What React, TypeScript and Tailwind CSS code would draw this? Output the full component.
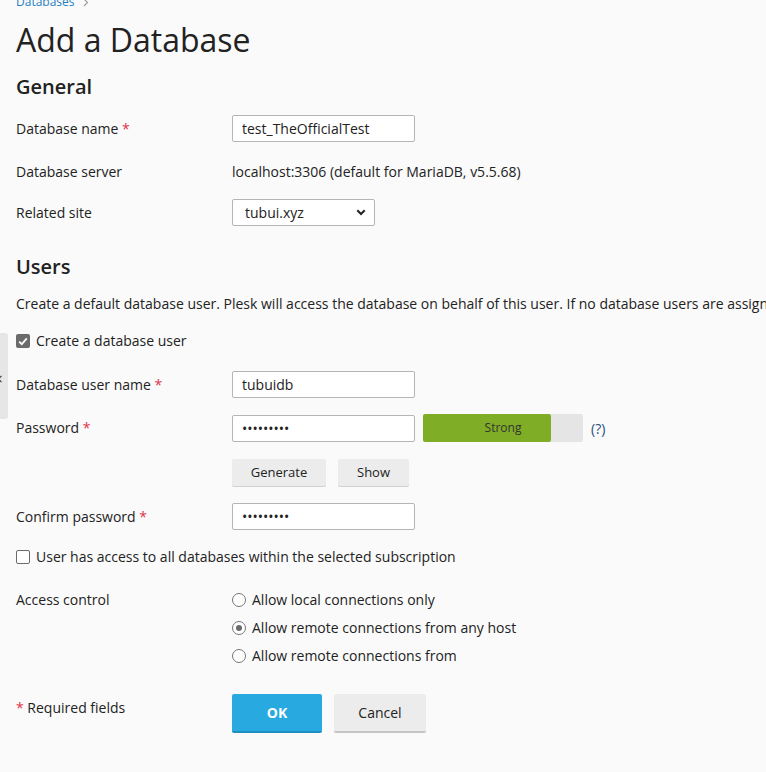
import React from "react";

const Req = () => <span className="text-[#e0334d]"> *</span>;

function Label({ children }: { children: React.ReactNode }) {
  return <div className="w-[216px] shrink-0 text-[14px] leading-[20px] text-[#222]">{children}</div>;
}

function TextInput({ value, type = "text" }: { value: string; type?: string }) {
  return (
    <input
      type={type}
      defaultValue={value}
      readOnly
      className="h-[27px] w-[183px] rounded-[2px] border border-[#b5b5b5] bg-white px-[9px] text-[14px] text-[#222] outline-none"
      style={{ fontFamily: "'Open Sans', sans-serif" }}
    />
  );
}

function Radio({ checked, label }: { checked?: boolean; label: string }) {
  return (
    <div className="flex h-[20px] items-center gap-[6px]">
      <span className="flex h-[14px] w-[14px] items-center justify-center rounded-full border border-[#767676] bg-white">
        {checked && <span className="h-[6px] w-[6px] rounded-full bg-[#6b6b6b]" />}
      </span>
      <span className="text-[14px] leading-[20px] text-[#222]">{label}</span>
    </div>
  );
}

export default function App() {
  return (
    <div
      className="relative h-[772px] w-full overflow-hidden bg-[#fafafa] text-[#222]"
      style={{ fontFamily: "'Open Sans', 'Noto Sans', sans-serif" }}
    >
      {/* left collapse tab */}
      <div className="absolute left-0 top-[333px] h-[86px] w-[8px] rounded-r-[3px] bg-[#e6e6e6]">
        <svg className="absolute left-[-3px] top-[42px]" width="6" height="8" viewBox="0 0 6 8">
          <path d="M4.5 0.8 L1.5 4 L4.5 7.2" stroke="#444" strokeWidth="1.2" fill="none" />
        </svg>
      </div>

      <div className="whitespace-nowrap pl-4">
        {/* breadcrumb */}
        <div className="-mt-[6px] flex h-[16px] items-center gap-[8px] text-[12px] leading-[16px]">
          <span className="text-[#1f7fbf]">Databases</span>
          <svg width="6" height="9" viewBox="0 0 6 9">
            <path d="M1 1 L4.5 4.5 L1 8" stroke="#9a9a9a" strokeWidth="1.1" fill="none" />
          </svg>
        </div>

        <h1 className="mt-[10px] text-[32px] font-normal leading-[40px] text-[#222]">Add a Database</h1>

        <h2 className="mt-[13px] text-[20px] font-semibold leading-[28px] text-[#222]">General</h2>

        <div className="mt-[14px] flex items-center">
          <Label>
            Database name<Req />
          </Label>
          <TextInput value="test_TheOfficialTest" />
        </div>

        <div className="mt-[20px] flex items-center">
          <Label>Database server</Label>
          <div className="text-[14px] leading-[20px] text-[#222]">localhost:3306 (default for MariaDB, v5.5.68)</div>
        </div>

        <div className="mt-[17px] flex items-center">
          <Label>Related site</Label>
          <div className="relative flex h-[27px] w-[143px] items-center rounded-[2px] border border-[#b5b5b5] bg-white pl-[12px] text-[14px] text-[#222]">
            tubui.xyz
            <svg className="absolute right-[8px] top-[9px]" width="10" height="7" viewBox="0 0 10 7">
              <path d="M1.3 1.3 L5 5 L8.7 1.3" stroke="#222" strokeWidth="2" fill="none" />
            </svg>
          </div>
        </div>

        <h2 className="mt-[27px] text-[20px] font-semibold leading-[28px] text-[#222]">Users</h2>

        <div className="mt-[13px] text-[14px] leading-[20px] text-[#222]">
          Create a default database user. Plesk will access the database on behalf of this user. If no database users are assigned to the database, Plesk will use the default database user.
        </div>

        <div className="mt-[17px] flex h-[20px] items-center gap-[6px]">
          <span className="flex h-[14px] w-[14px] items-center justify-center rounded-[2px] bg-[#6b6b6b]">
            <svg width="10" height="9" viewBox="0 0 10 9">
              <path d="M1.2 4.6 L3.8 7.2 L8.8 1.4" stroke="#fff" strokeWidth="1.8" fill="none" />
            </svg>
          </span>
          <span className="text-[14px] leading-[20px]">Create a database user</span>
        </div>

        <div className="mt-[20px] flex items-center">
          <Label>
            Database user name<Req />
          </Label>
          <TextInput value="tubuidb" />
        </div>

        <div className="mt-[16px] flex items-center">
          <Label>
            Password<Req />
          </Label>
          <TextInput value="123456789" type="password" />
          <div className="relative ml-[8px] flex h-[28px] w-[160px] overflow-hidden rounded-[2px] bg-[#e5e5e5]">
            <div className="h-full w-[128px] rounded-r-[2px] bg-[#80ad26]" />
            <span className="absolute inset-0 flex items-center justify-center text-[12px] text-[#333]">Strong</span>
          </div>
          <span className="ml-[8px] text-[14px] text-[#2b4f7a]">(?)</span>
        </div>

        <div className="mt-[17px] flex gap-[12px] pl-[216px]">
          <button className="h-[27px] w-[94px] rounded-[2px] bg-[#ececec] text-[13px] text-[#222] shadow-[0_1px_0_#d0d0d0]">
            Generate
          </button>
          <button className="h-[27px] w-[71px] rounded-[2px] bg-[#ececec] text-[13px] text-[#222] shadow-[0_1px_0_#d0d0d0]">
            Show
          </button>
        </div>

        <div className="mt-[17px] flex items-center">
          <Label>
            Confirm password<Req />
          </Label>
          <TextInput value="123456789" type="password" />
        </div>

        <div className="mt-[17px] flex h-[20px] items-center gap-[6px]">
          <span className="h-[14px] w-[14px] rounded-[2px] border border-[#6b6b6b] bg-white" />
          <span className="text-[14px] leading-[20px]">User has access to all databases within the selected subscription</span>
        </div>

        <div className="mt-[23px] flex items-start">
          <Label>Access control</Label>
          <div className="flex flex-col gap-[8px]">
            <Radio label="Allow local connections only" />
            <Radio checked label="Allow remote connections from any host" />
            <Radio label="Allow remote connections from" />
          </div>
        </div>

        <div className="mt-[28px] flex items-start">
          <div className="mt-[4px] w-[216px] shrink-0 text-[14px] leading-[20px] text-[#222]">
            <span className="text-[#e0334d]">*</span> Required fields
          </div>
          <div className="flex gap-[12px]">
            <button className="h-[39px] w-[90px] rounded-[2px] border-b-2 border-[#1f8fc2] bg-[#28a9df] text-[14px] font-bold text-white">
              OK
            </button>
            <button className="h-[39px] w-[92px] rounded-[2px] border-b-2 border-[#c4c4c4] bg-[#ececec] text-[14px] text-[#222]">
              Cancel
            </button>
          </div>
        </div>
      </div>
    </div>
  );
}
